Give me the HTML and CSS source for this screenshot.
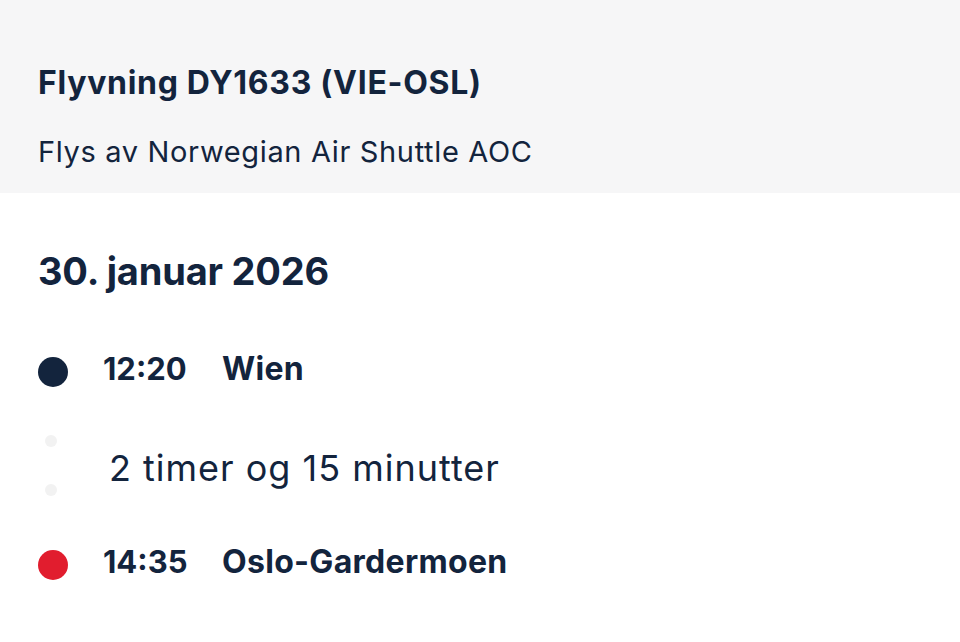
FILE: index.html
```html
<!DOCTYPE html>
<html lang="no">
<head>
<meta charset="utf-8">
<link rel="stylesheet" href="styles.css">
</head>
<body>
<header class="flight-head">
  <h1 class="flight-title">Flyvning DY1633 (VIE-OSL)</h1>
  <p class="flight-operator">Flys av Norwegian Air Shuttle AOC</p>
</header>
<main class="itinerary">
  <h2 class="date">30. januar 2026</h2>
  <div class="stop">
    <span class="dot dot-dep"></span>
    <span class="time">12:20</span>
    <span class="place">Wien</span>
  </div>
  <div class="leg">
    <div class="leg-line">
      <span class="mini-dot"></span>
      <span class="mini-dot"></span>
    </div>
    <span class="duration">2 timer og 15 minutter</span>
  </div>
  <div class="stop">
    <span class="dot dot-arr"></span>
    <span class="time">14:35</span>
    <span class="place">Oslo-Gardermoen</span>
  </div>
</main>
</body>
</html>
```
FILE: styles.css
```css
* { box-sizing: border-box; }
html, body { margin: 0; padding: 0; background: #ffffff; }
body {
  font-family: Inter, "Noto Sans", sans-serif;
  color: #13243d;
}
.flight-head {
  background: #f6f6f7;
  height: 193px;
  padding: 64px 38px 0;
}
.flight-title {
  margin: 0;
  font-size: 32px;
  font-weight: 700;
  line-height: 38px;
  letter-spacing: 0.7px;
}
.flight-operator {
  margin: 31px 0 0;
  font-size: 29px;
  font-weight: 400;
  line-height: 38px;
  letter-spacing: 0.65px;
}
.itinerary {
  padding: 55px 38px 0;
}
.date {
  margin: 0;
  font-size: 38px;
  font-weight: 700;
  line-height: 46px;
  letter-spacing: -0.2px;
}
.stop {
  display: flex;
  align-items: center;
  height: 50px;
}
.itinerary .stop:first-of-type { margin-top: 49px; }
.dot {
  width: 30px;
  height: 30px;
  border-radius: 50%;
  flex: none;
  margin-top: 8px;
}
.dot-dep { background: #13243d; }
.dot-arr { background: #e11d2e; }
.time {
  margin-left: 35px;
  font-size: 31px;
  font-weight: 700;
  width: 119px;
}
.place {
  font-size: 32px;
  font-weight: 700;
  letter-spacing: 0.3px;
}
.leg {
  display: flex;
  align-items: center;
  height: 143px;
}
.leg-line {
  width: 30px;
  display: flex;
  flex-direction: column;
  align-items: center;
  gap: 37px;
  margin-top: 2px;
}
.mini-dot {
  width: 12px;
  height: 12px;
  border-radius: 50%;
  background: #f2f2f2;
  margin-left: -4px;
}
.duration {
  margin-left: 41px;
  padding-top: 6px;
  font-size: 36px;
  font-weight: 400;
  letter-spacing: 1px;
}
```
